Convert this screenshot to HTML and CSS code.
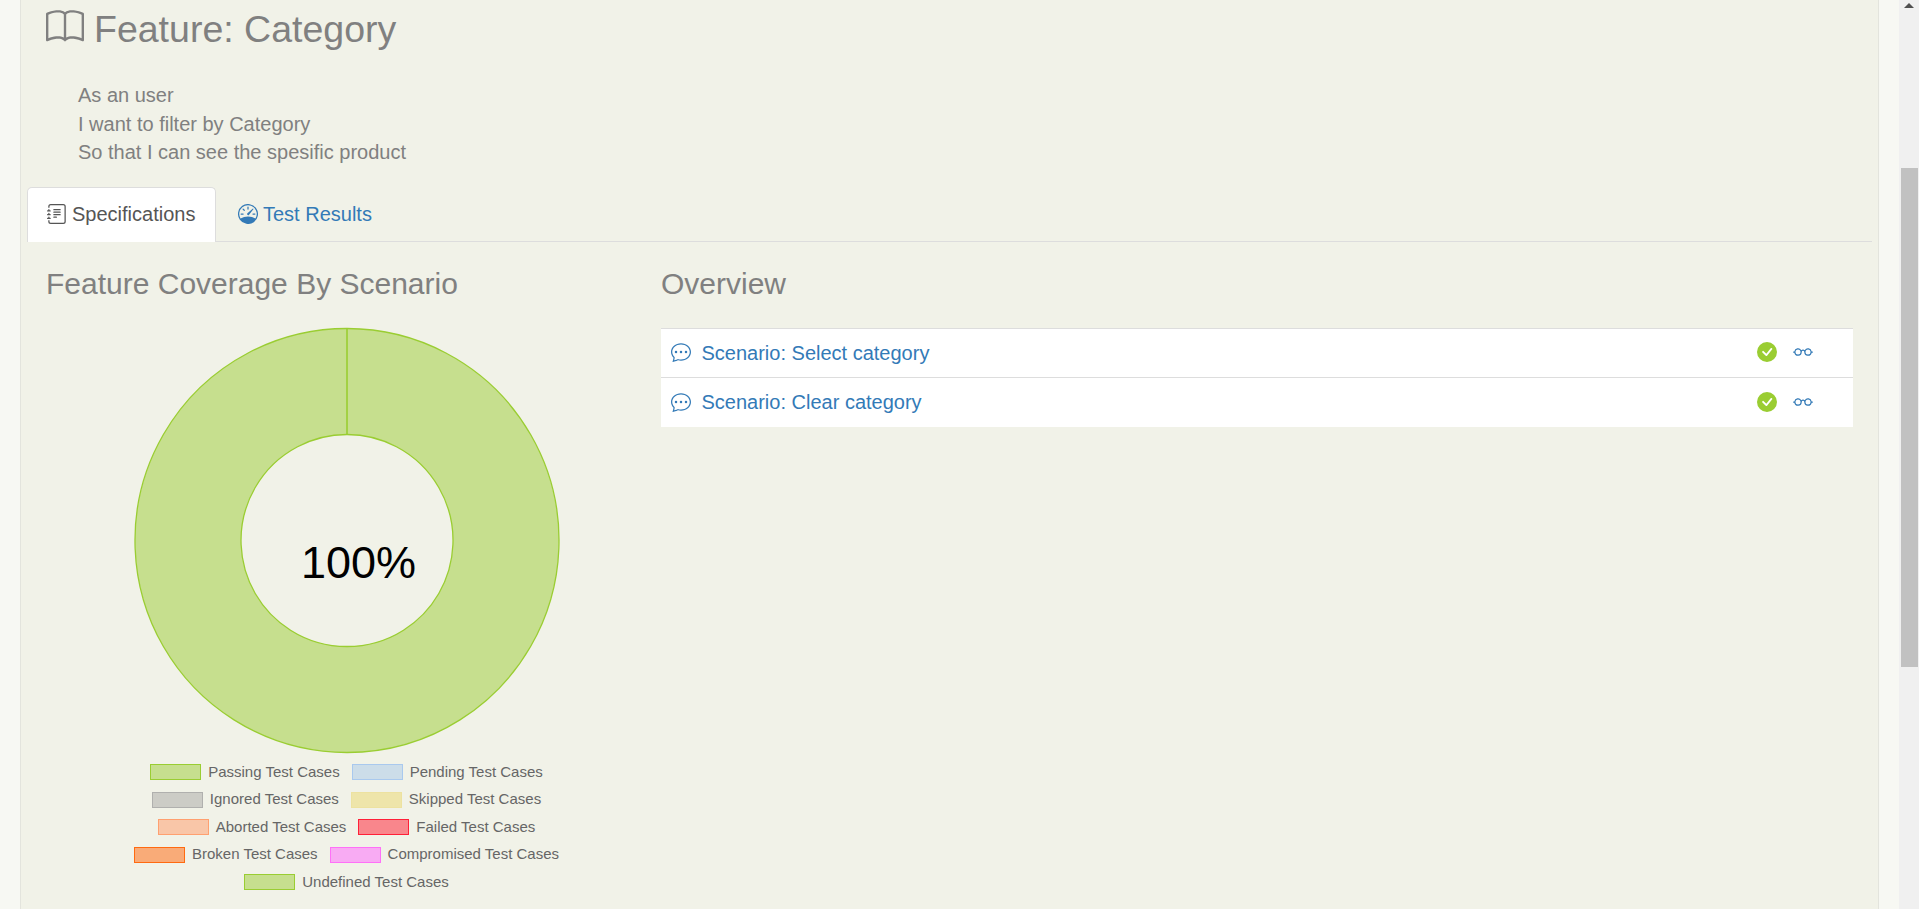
FILE: index.html
```html
<!DOCTYPE html>
<html lang="en">
<head>
<meta charset="utf-8">
<title>Feature: Category</title>
<link rel="stylesheet" href="styles.css">
</head>
<body>
<svg class="sprite" aria-hidden="true">
  <symbol id="chat" viewBox="0 0 16 16"><path d="M5 8a1 1 0 1 1-2 0 1 1 0 0 1 2 0m4 0a1 1 0 1 1-2 0 1 1 0 0 1 2 0m3 1a1 1 0 1 0 0-2 1 1 0 0 0 0 2"/><path d="m2.165 15.803.02-.004c1.83-.363 2.948-.842 3.468-1.105A9 9 0 0 0 8 15c4.418 0 8-3.134 8-7s-3.582-7-8-7-8 3.134-8 7c0 1.76.743 3.37 1.97 4.6a10.4 10.4 0 0 1-.524 2.318l-.003.011a11 11 0 0 1-.244.637c-.079.186.074.394.273.362a22 22 0 0 0 .693-.125m.8-3.108a1 1 0 0 0-.287-.801C1.618 10.83 1 9.468 1 8c0-3.192 3.004-6 7-6s7 2.808 7 6-3.004 6-7 6a8 8 0 0 1-2.088-.272 1 1 0 0 0-.711.074c-.387.196-1.24.57-2.634.893a11 11 0 0 0 .398-2"/></symbol>
  <symbol id="check" viewBox="0 0 16 16"><path d="M16 8A8 8 0 1 1 0 8a8 8 0 0 1 16 0m-3.97-3.03a.75.75 0 0 0-1.08.022L7.477 9.417 5.384 7.323a.75.75 0 0 0-1.06 1.06L6.97 11.03a.75.75 0 0 0 1.079-.02l3.992-4.99a.75.75 0 0 0-.01-1.05z"/></symbol>
  <symbol id="glasses" viewBox="0 0 16 16"><path d="M4 6a2 2 0 1 1 0 4 2 2 0 0 1 0-4m2.625.547a3 3 0 0 0-5.584.953H.5a.5.5 0 0 0 0 1h.541A3 3 0 0 0 7 8a1 1 0 0 1 2 0 3 3 0 0 0 5.959.5h.541a.5.5 0 0 0 0-1h-.541a3 3 0 0 0-5.584-.953A2 2 0 0 0 8 6c-.532 0-1.016.208-1.375.547M14 8a2 2 0 1 1-4 0 2 2 0 0 1 4 0"/></symbol>
</svg>
<div class="page">
  <main class="panel">
    <h2 class="title">
      <svg class="title-icon" viewBox="0 0 16 16"><path d="M1 2.828c.885-.37 2.154-.769 3.388-.893 1.33-.134 2.458.063 3.112.752v9.746c-.935-.53-2.12-.603-3.213-.493-1.18.12-2.37.461-3.287.811zm7.5-.141c.654-.689 1.782-.886 3.112-.752 1.234.124 2.503.523 3.388.893v9.923c-.918-.35-2.107-.692-3.287-.81-1.094-.111-2.278-.039-3.213.492zM8 1.783C7.015.936 5.587.81 4.287.94c-1.514.153-3.042.672-3.994 1.105A.5.5 0 0 0 0 2.5v11a.5.5 0 0 0 .707.455c.882-.4 2.303-.881 3.68-1.02 1.409-.142 2.59.087 3.223.877a.5.5 0 0 0 .78 0c.633-.79 1.814-1.019 3.222-.877 1.378.139 2.8.62 3.681 1.02A.5.5 0 0 0 16 13.5v-11a.5.5 0 0 0-.293-.455c-.952-.433-2.48-.952-3.994-1.105C10.413.809 8.985.936 8 1.783"/></svg>
      <span>Feature: Category</span>
    </h2>
    <p class="narrative">As an user<br>I want to filter by Category<br>So that I can see the spesific product</p>
    <nav class="tabs">
      <a class="tab tab-active">
        <svg class="icon" viewBox="0 0 16 16"><path d="M5 10.5a.5.5 0 0 1 .5-.5h2a.5.5 0 0 1 0 1h-2a.5.5 0 0 1-.5-.5m0-2a.5.5 0 0 1 .5-.5h5a.5.5 0 0 1 0 1h-5a.5.5 0 0 1-.5-.5m0-2a.5.5 0 0 1 .5-.5h5a.5.5 0 0 1 0 1h-5a.5.5 0 0 1-.5-.5m0-2a.5.5 0 0 1 .5-.5h5a.5.5 0 0 1 0 1h-5a.5.5 0 0 1-.5-.5"/><path d="M3 0h10a2 2 0 0 1 2 2v12a2 2 0 0 1-2 2H3a2 2 0 0 1-2-2v-1h1v1a1 1 0 0 0 1 1h10a1 1 0 0 0 1-1V2a1 1 0 0 0-1-1H3a1 1 0 0 0-1 1v1H1V2a2 2 0 0 1 2-2"/><path d="M1 5v-.5a.5.5 0 0 1 1 0V5h.5a.5.5 0 0 1 0 1h-2a.5.5 0 0 1 0-1zm0 3v-.5a.5.5 0 0 1 1 0V8h.5a.5.5 0 0 1 0 1h-2a.5.5 0 0 1 0-1zm0 3v-.5a.5.5 0 0 1 1 0v.5h.5a.5.5 0 0 1 0 1h-2a.5.5 0 0 1 0-1z"/></svg>
        <span>Specifications</span>
      </a>
      <a class="tab">
        <svg class="icon" viewBox="0 0 16 16"><path d="M8 2a.5.5 0 0 1 .5.5V4a.5.5 0 0 1-1 0V2.5A.5.5 0 0 1 8 2M3.732 3.732a.5.5 0 0 1 .707 0l.915.914a.5.5 0 1 1-.708.708l-.914-.915a.5.5 0 0 1 0-.707M2 8a.5.5 0 0 1 .5-.5h1.586a.5.5 0 0 1 0 1H2.5A.5.5 0 0 1 2 8m9.5 0a.5.5 0 0 1 .5-.5h1.5a.5.5 0 0 1 0 1H12a.5.5 0 0 1-.5-.5m.754-4.246a.39.39 0 0 0-.527-.02L7.547 7.31A.91.91 0 1 0 8.85 8.569l3.434-4.297a.39.39 0 0 0-.029-.518z"/><path fill-rule="evenodd" d="M6.664 15.889A8 8 0 1 1 9.336.11a8 8 0 0 1-2.672 15.78zm-4.665-4.283A11.95 11.95 0 0 1 8 10c2.186 0 4.236.585 6.001 1.606a7 7 0 1 0-12.002 0"/></svg>
        <span>Test Results</span>
      </a>
    </nav>
    <div class="columns">
      <section class="coverage">
        <h3 class="heading">Feature Coverage By Scenario</h3>
        <svg class="chart" viewBox="0 0 428 428">
          <path class="ring" fill-rule="evenodd" d="M214 2.5A212 212 0 1 1 213.99 2.5ZM214 108.5A106 106 0 1 0 214.01 108.5Z"/>
          <path class="ring-seam" d="M214 2.5V108.5"/>
          <text class="percent" x="168" y="251.5">100%</text>
        </svg>
        <div class="legend">
          <div class="legend-row"><span class="key"><i class="swatch passing"></i>Passing Test Cases</span><span class="key"><i class="swatch pending"></i>Pending Test Cases</span></div>
          <div class="legend-row"><span class="key"><i class="swatch ignored"></i>Ignored Test Cases</span><span class="key"><i class="swatch skipped"></i>Skipped Test Cases</span></div>
          <div class="legend-row"><span class="key"><i class="swatch aborted"></i>Aborted Test Cases</span><span class="key"><i class="swatch failed"></i>Failed Test Cases</span></div>
          <div class="legend-row"><span class="key"><i class="swatch broken"></i>Broken Test Cases</span><span class="key"><i class="swatch compromised"></i>Compromised Test Cases</span></div>
          <div class="legend-row"><span class="key"><i class="swatch passing"></i>Undefined Test Cases</span></div>
        </div>
      </section>
      <section class="overview">
        <h3 class="heading">Overview</h3>
        <div class="scenarios">
          <div class="scenario">
            <svg class="icon"><use href="#chat"/></svg><a class="name">Scenario: Select category</a>
            <svg class="icon ok"><use href="#check"/></svg><svg class="icon"><use href="#glasses"/></svg>
          </div>
          <div class="scenario">
            <svg class="icon"><use href="#chat"/></svg><a class="name">Scenario: Clear category</a>
            <svg class="icon ok"><use href="#check"/></svg><svg class="icon"><use href="#glasses"/></svg>
          </div>
        </div>
      </section>
    </div>
  </main>
  <div class="scrollbar"><span class="arrow"></span><span class="thumb"></span></div>
</div>
</body>
</html>
```
FILE: styles.css
```css
* { box-sizing: border-box; }
body {
  margin: 0;
  background: #f7f8f3;
  color: #808080;
  font-family: "Liberation Sans", Arial, sans-serif;
  font-size: 20px;
  line-height: 28.57px;
}
.sprite { display: none; }
.page { display: flex; height: 909px; overflow: hidden; }
.panel {
  flex: 1;
  margin: 0 20px;
  padding: 0 6px;
  background: #f1f2e8;
  border: solid #e3e4dd;
  border-width: 0 1px;
}
.title {
  display: flex;
  align-items: flex-start;
  gap: 10px;
  height: 49px;
  margin: 0;
  padding: 8px 19px 0;
  font-size: 37.5px;
  font-weight: normal;
  line-height: 43px;
}
.title-icon { width: 38px; height: 38px; fill: currentColor; }
.narrative { margin: 0; padding: 32px 51px 0; }
.tabs {
  display: flex;
  margin-top: 20px;
  height: 55px;
  border-bottom: 1px solid #ddd;
}
.tab {
  display: flex;
  height: 55px;
  padding: 12px 19px 0 19px;
  margin-right: 3px;
  gap: 5px;
  border: 1px solid transparent;
  border-bottom: 0;
  border-radius: 5px 5px 0 0;
  color: #337ab7;
}
.tab-active { width: 189px; background: #fff; border-color: #ddd; color: #555; }
.tab + .tab { margin-left: -1px; }
.tab .icon { margin-top: 4px; }
.icon { flex: none; width: 20px; height: 20px; fill: currentColor; }
.columns { display: flex; }
.coverage { width: 615px; padding: 0 19px; }
.overview { flex: 1; padding: 0 19px; }
.heading {
  margin: 0;
  padding-top: 25px;
  font-size: 30px;
  font-weight: normal;
  line-height: 33px;
}
.chart { display: block; width: 428px; height: 428px; margin: 26px 0 0 87px; }
.ring { fill: #c6df8e; stroke: #9acd32; stroke-width: 1.3; }
.ring-seam { stroke: #9acd32; stroke-width: 1.6; }
.percent { fill: #000; font-size: 45px; }
.legend { width: 427px; margin: 4px 0 0 87px; color: #666; font-size: 15px; }
.legend-row {
  display: flex;
  justify-content: center;
  gap: 12px;
  height: 27.5px;
  line-height: 27.5px;
  white-space: nowrap;
}
.key { display: flex; align-items: center; gap: 7px; }
.swatch { width: 51px; height: 16px; margin-top: 2px; border: 1.5px solid; }
.passing { background: #c6df8e; border-color: #9acd32; }
.pending { background: #ccdde9; border-color: #a9c9ee; }
.ignored { background: #ccccc6; border-color: #b0b0ae; }
.skipped { background: #eee5aa; border-color: #ede2a0; }
.aborted { background: #f9c6a8; border-color: #ffa070; }
.failed { background: #f9868c; border-color: #ff2038; }
.broken { background: #f9ab78; border-color: #ff6a10; }
.compromised { background: #f8abf3; border-color: #ff70f8; }
.scenarios { margin-top: 28px; background: #fff; }
.scenario {
  display: flex;
  align-items: flex-start;
  height: 49px;
  padding: 13px 40px 0 10px;
  border-top: 1px solid #ddd;
  color: #337ab7;
}
.scenario + .scenario { height: 50px; padding-top: 14px; }
.name { flex: 1; margin: -3px 0 0 10.5px; }
.scenario + .scenario .name { margin-top: -4px; }
.scenario .ok { fill: #9acd32; margin-right: 16px; }
.scrollbar {
  display: flex;
  flex-direction: column;
  align-items: center;
  width: 20px;
  background: #f0f0f0;
}
.arrow {
  width: 0;
  height: 8px;
  border: solid transparent;
  border-width: 3px 5px 5px;
  border-bottom-color: #505050;
}
.thumb { width: 17px; height: 499px; margin-top: 160px; background: #c1c1c1; }
```
